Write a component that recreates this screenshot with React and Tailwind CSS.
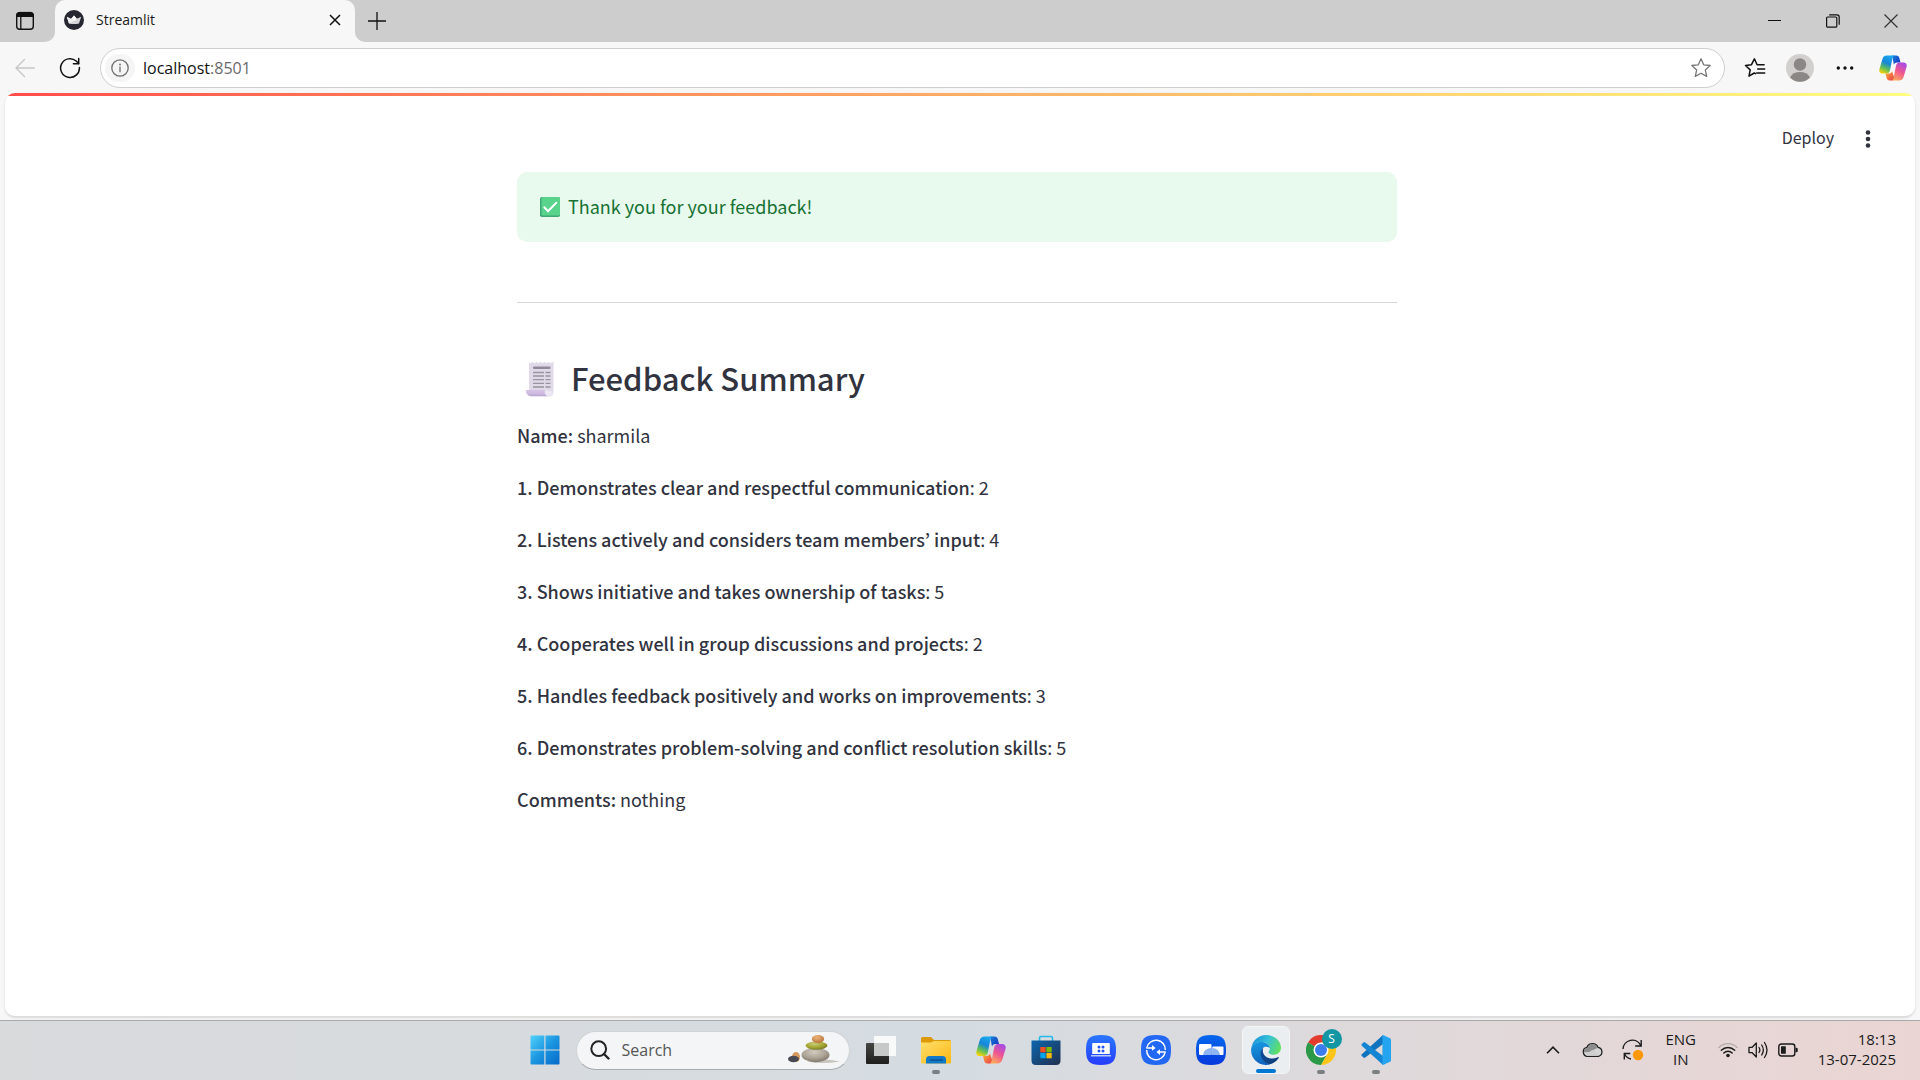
import React from "react";

const uiFont = 'font-["Open_Sans","Noto_Sans",sans-serif]';
const appFont = 'font-["Noto_Sans_CJK_KR",sans-serif]';

const ratings = [
  ["1. Demonstrates clear and respectful communication", 2],
  ["2. Listens actively and considers team members’ input", 4],
  ["3. Shows initiative and takes ownership of tasks", 5],
  ["4. Cooperates well in group discussions and projects", 2],
  ["5. Handles feedback positively and works on improvements", 3],
  ["6. Demonstrates problem-solving and conflict resolution skills", 5],
];

function TabActionsIcon() {
  return (
    <svg width="20" height="20" viewBox="0 0 20 20" fill="none" stroke="#111">
      <rect x="1.7" y="1.7" width="16.6" height="16.6" rx="3" strokeWidth="1.4" />
      <path d="M1.7 5.5V4.2a2.8 2.8 0 0 1 2.8-2.8h11a2.8 2.8 0 0 1 2.8 2.8v1.3z" fill="#111" />
      <path d="M5.8 5v13" strokeWidth="1.3" />
    </svg>
  );
}

function StreamlitIcon() {
  return (
    <svg width="20" height="20" viewBox="0 0 20 20">
      <circle cx="10" cy="10" r="10" fill="#262730" />
      <path d="M2.800 6.800 7.200 8.800 10 5.600l2.800 3.200L17.200 6.800 15 13.600q-5 1-10 0z" fill="#d5d5d8" />
      <path d="M7.200 8.800 10 5.600l2.800 3.200L10 11z" fill="#fff" />
      <path d="M2.800 6.800 10 11l-5 2.600z" fill="#f1f1f3" />
    </svg>
  );
}

function BackIcon() {
  return (
    <svg width="20" height="20" viewBox="0 0 20 20" fill="none" stroke="#c6c6c6" strokeWidth="1.3" strokeLinecap="round" strokeLinejoin="round">
      <path d="M19.3 10H1M9.5 1.5 1 10l8.500 8.500" />
    </svg>
  );
}

function ReloadIcon() {
  return (
    <svg width="22" height="22" viewBox="0 0 22 22" fill="none" stroke="#111" strokeWidth="1.5" strokeLinecap="round" strokeLinejoin="round">
      <path d="M20.400 10.500A9.400 9.400 0 1 1 17.200 4L19.600 6.600" />
      <path d="M19.700 1.500v5.200h-5.300" />
    </svg>
  );
}

function InfoIcon() {
  return (
    <svg width="18" height="18" viewBox="0 0 18 18" fill="none" stroke="#6e6e6e" strokeWidth="1.300">
      <circle cx="9" cy="9" r="8.200" />
      <path d="M9 8v4.800" strokeLinecap="round" />
      <circle cx="9" cy="5.500" r="0.900" fill="#6e6e6e" stroke="none" />
    </svg>
  );
}

function StarIcon() {
  return (
    <svg width="22" height="22" viewBox="0 0 22 22" fill="none" stroke="#777" strokeWidth="1.300" strokeLinejoin="round">
      <path d="m11 1.800 2.700 6 6.500.7-4.900 4.400 1.400 6.500L11 16.300l-5.700 3.100 1.400-6.500L1.800 8.500l6.500-.7z" />
    </svg>
  );
}

function FavoritesIcon() {
  return (
    <svg width="22" height="22" viewBox="0 0 22 22" fill="none" stroke="#111" strokeWidth="1.500" strokeLinejoin="round" strokeLinecap="round">
      <path d="M11.500 16.600 10.300 16 5 19.200l1.200-6.300-4.700-4.400 6-.8 2.900-5.900 2.700 5.900h7" />
      <path d="M13.700 11.900h7M12.700 16.100h8" />
    </svg>
  );
}

function AvatarIcon() {
  return (
    <svg width="28" height="28" viewBox="0 0 28 28">
      <circle cx="14" cy="14" r="14" fill="#d2d0ce" />
      <circle cx="14" cy="10.500" r="6.200" fill="#8a8785" />
      <path d="M4 23.500C6 19.800 9.500 18 14 18s8 1.800 10 5.500a14 14 0 0 1-20 0z" fill="#8a8785" />
    </svg>
  );
}

function CopilotIcon({ id, size }) {
  const blue = id + "-blue";
  const warm = id + "-warm";
  const dark = id + "-dark";
  const red = id + "-red";
  return (
    <svg width={size} height={size} viewBox="0 0 30 30">
      <defs>
        <linearGradient id={blue} x1="0.600" y1="0" x2="0.200" y2="1">
          <stop offset="0" stopColor="#1aa8ee" />
          <stop offset="0.400" stopColor="#1685d9" />
          <stop offset="0.700" stopColor="#5fbf5b" />
          <stop offset="1" stopColor="#ffd400" />
        </linearGradient>
        <linearGradient id={warm} x1="0.800" y1="0" x2="0.300" y2="1">
          <stop offset="0" stopColor="#a24bea" />
          <stop offset="0.500" stopColor="#f0568f" />
          <stop offset="1" stopColor="#ffab5c" />
        </linearGradient>
        <linearGradient id={dark} x1="0" y1="0" x2="1" y2="1">
          <stop offset="0" stopColor="#1b7fe0" />
          <stop offset="1" stopColor="#1230b8" />
        </linearGradient>
        <linearGradient id={red} x1="0" y1="0" x2="1" y2="1">
          <stop offset="0" stopColor="#ffb02e" />
          <stop offset="1" stopColor="#e8384f" />
        </linearGradient>
      </defs>
      <path d="M14 1.500h4.500c2 0 2.800 1 3.300 2.700L23 9h-3.500c-1.800 0-3 .8-3.500 2.500z" fill={`url(#${dark})`} />
      <path d="M7 21h3.500c1.500 0 3-.8 3.500-2.500L16.500 26l-1.500 2.500h-3.500c-2 0-2.800-1-3.300-2.700z" fill={`url(#${red})`} />
      <path d="M8.500 1.500h9c-1.800 0-2.600 1.200-3 2.600L11.800 17.500c-.6 2.300-1.900 3.500-3.700 3.500H4c-3 0-4.300-2-3.500-5L3.800 5c.7-2.300 2.300-3.500 4.700-3.500z" fill={`url(#${blue})`} />
      <path d="M21.500 28.500h-9c1.800 0 2.600-1.200 3-2.600L18.200 12.500c.6-2.300 1.900-3.500 3.700-3.500H26c3 0 4.300 2 3.500 5L26.200 25c-.7 2.300-2.300 3.500-4.700 3.500z" fill={`url(#${warm})`} />
    </svg>
  );
}

function CheckEmoji() {
  return (
    <svg width="20" height="20" viewBox="0 0 20 20" role="img" aria-label="Check mark">
      <rect width="20" height="20" rx="1.800" fill="#3fa876" />
      <rect x="1.500" width="18.500" height="18.500" rx="1.500" fill="#57d38c" />
      <path d="m4.300 10.300 3.700 4L16.300 5.700" fill="none" stroke="#fff" strokeWidth="2" strokeLinecap="round" />
    </svg>
  );
}

function ScrollEmoji() {
  return (
    <svg width="30" height="36" viewBox="0 0 30 36" role="img" aria-label="Receipt" className="shrink-0">
      <defs>
        <linearGradient id="scroll-roll" x1="0" y1="0" x2="0" y2="1">
          <stop offset="0" stopColor="#d3c3e4" />
          <stop offset="0.600" stopColor="#cdbbe0" />
          <stop offset="1" stopColor="#b39ccb" />
        </linearGradient>
      </defs>
      <path d="M4 1l1.700 1.300L7.500 1l2 1.300 2-1.300 2 1.300 2-1.300 2 1.300 2-1.300 2 1.300 2-1.300 2 1.300L27 1l1.500.8V31q0 4.500-5 4.500L4 31z" fill="#dfd9e8" />
      <path d="M1 29h19q-1 3 .6 4.700 1 1.300 2.600 1.600H6Q1 35 1 29z" fill="url(#scroll-roll)" />
      <path d="M20 29q7 2 8.500 1-.3 5-5 5.300Q19 34 20 29z" fill="#ece7f3" />
      <rect x="8" y="5.500" width="17.500" height="2.600" rx="1" fill="#8f899b" />
      <g stroke="#99929f" strokeWidth="1.300">
        <path d="M8 11.500h11M20.500 11.500h5M8 15h11M20.500 15h5M8 18.600h11M20.500 18.600h5M8 22.300h11M20.500 22.300h5M8 26h11M20.500 26h5" />
      </g>
    </svg>
  );
}

function StartIcon() {
  return (
    <svg width="30" height="30" viewBox="0 0 30 30">
      <defs>
        <linearGradient id="start" x1="0" y1="0" x2="1" y2="1">
          <stop offset="0" stopColor="#4fd2fb" />
          <stop offset="0.500" stopColor="#1b95e0" />
          <stop offset="1" stopColor="#0669c8" />
        </linearGradient>
      </defs>
      <path d="M1.500.5H14.300v14H.5v-13a1 1 0 0 1 1-1zM15.500.5h13a1 1 0 0 1 1 1v13h-14zM.5 15.500h13.800v14H1.500a1 1 0 0 1-1-1zM15.500 15.500h14v13a1 1 0 0 1-1 1h-13z" fill="url(#start)" />
    </svg>
  );
}

function StonesIcon() {
  return (
    <svg width="54" height="30" viewBox="0 0 54 30">
      <defs>
        <radialGradient id="stone-big" cx="0.450" cy="0.300" r="0.700">
          <stop offset="0" stopColor="#d2cbbf" />
          <stop offset="0.600" stopColor="#aaa294" />
          <stop offset="1" stopColor="#7f776b" />
        </radialGradient>
        <radialGradient id="stone-mid" cx="0.400" cy="0.300" r="0.700">
          <stop offset="0" stopColor="#c9cb7a" />
          <stop offset="0.600" stopColor="#a3a62f" />
          <stop offset="1" stopColor="#7a7a2a" />
        </radialGradient>
        <radialGradient id="stone-top" cx="0.400" cy="0.300" r="0.700">
          <stop offset="0" stopColor="#eeb37b" />
          <stop offset="1" stopColor="#b9783c" />
        </radialGradient>
      </defs>
      <path d="M20 26.500q15-4 33 0-18 3-33 0z" fill="#c9c4bd" />
      <ellipse cx="9" cy="22" rx="4" ry="5" fill="#d59a5c" />
      <ellipse cx="6.500" cy="24" rx="5.500" ry="3.200" fill="#474a52" />
      <ellipse cx="28.500" cy="20" rx="14" ry="7.200" fill="url(#stone-big)" />
      <ellipse cx="29.500" cy="10.600" rx="11" ry="4.200" fill="url(#stone-mid)" />
      <ellipse cx="31" cy="4" rx="6.200" ry="4" fill="url(#stone-top)" />
    </svg>
  );
}

function TaskViewIcon() {
  return (
    <svg width="30" height="30" viewBox="0 0 30 30">
      <defs>
        <linearGradient id="task-dark" x1="0" y1="0" x2="0" y2="1">
          <stop offset="0" stopColor="#454643" />
          <stop offset="1" stopColor="#1f201e" />
        </linearGradient>
      </defs>
      <rect x="0" y="8" width="23" height="21" rx="1" fill="url(#task-dark)" />
      <rect x="8" y="1" width="22" height="20" rx="1" fill="#fafafa" fillOpacity="0.950" />
      <rect x="8" y="8" width="15" height="13" fill="#c7c8c8" />
    </svg>
  );
}

function FolderIcon() {
  return (
    <svg width="30" height="30" viewBox="0 0 30 30">
      <defs>
        <linearGradient id="folder" x1="0" y1="0" x2="1" y2="1">
          <stop offset="0" stopColor="#ffdf6c" />
          <stop offset="1" stopColor="#fbb814" />
        </linearGradient>
      </defs>
      <path d="M0 3.500Q0 2 1.500 2H10l3 3h15.500Q30 5 30 6.500V12H0z" fill="#dd9a05" />
      <path d="M0 7.500h10L13 6h16q1 0 1 1v20.500q0 1-1 1H1q-1 0-1-1z" fill="url(#folder)" />
      <path d="M5 28.500v-4q0-3.500 3.500-3.500h13q3.500 0 3.500 3.500v4z" fill="#1279c9" />
      <path d="M9 25h13" stroke="#0a4f90" strokeWidth="1.400" />
    </svg>
  );
}

function StoreIcon() {
  return (
    <svg width="30" height="30" viewBox="0 0 30 30">
      <defs>
        <linearGradient id="store" x1="0" y1="0" x2="1" y2="1">
          <stop offset="0" stopColor="#0b66ae" />
          <stop offset="1" stopColor="#22304f" />
        </linearGradient>
      </defs>
      <path d="M8.500 6V3q0-1.500 1.500-1.500h10q1.500 0 1.500 1.500v3" fill="none" stroke="#25b8ec" strokeWidth="1.600" />
      <path d="M.5 5.500h29v20q0 4.500-4.500 4.500H5Q.5 30 .5 25.500z" fill="url(#store)" />
      <rect x="9.300" y="12" width="5.300" height="5.300" fill="#f25022" />
      <rect x="15.400" y="12" width="5.300" height="5.300" fill="#7fba00" />
      <rect x="9.300" y="18" width="5.300" height="5.300" fill="#00a4ef" />
      <rect x="15.400" y="18" width="5.300" height="5.300" fill="#ffb900" />
    </svg>
  );
}

function DexIcon() {
  return (
    <svg width="30" height="30" viewBox="0 0 30 30">
      <defs>
        <linearGradient id="dex" x1="0" y1="0" x2="0" y2="1">
          <stop offset="0" stopColor="#2977ff" />
          <stop offset="1" stopColor="#273dff" />
        </linearGradient>
      </defs>
      <path d="M15 0c11.500 0 15 3.500 15 15s-3.500 15-15 15S0 26.500 0 15 3.500 0 15 0z" fill="url(#dex)" />
      <path d="M7 8h16q.8 0 .8.800V19H6.200V8.800Q6.200 8 7 8z" fill="#fff" />
      <path d="M5 20h20v1.500H5z" fill="#b9c9ff" />
      <g fill="#2456f5">
        <circle cx="13" cy="12" r="1.500" />
        <circle cx="17" cy="12" r="1.500" />
        <circle cx="13" cy="16" r="1.500" />
        <circle cx="17" cy="16" r="1.500" />
      </g>
    </svg>
  );
}

function SwitchIcon() {
  return (
    <svg width="30" height="30" viewBox="0 0 30 30">
      <path d="M15 0c11.500 0 15 3.500 15 15s-3.500 15-15 15S0 26.500 0 15 3.500 0 15 0z" fill="#2367f5" />
      <g fill="none" stroke="#fff" strokeWidth="1.500">
        <path d="M5.900 12.700a9.300 9.300 0 0 1 18.400 2.300" />
        <path d="M24.100 17.300a9.300 9.300 0 0 1-18.400-2.300" />
        <path d="M5.200 12.900h6.500M24.800 17.100h-6.500" />
      </g>
      <path d="M11 10.100 14.600 12.900 11 15.700zM19 14.300l-3.600 2.800 3.600 2.800z" fill="#fff" />
    </svg>
  );
}

function FlowIcon() {
  return (
    <svg width="30" height="30" viewBox="0 0 30 30">
      <defs>
        <linearGradient id="flow" x1="0" y1="0" x2="0" y2="1">
          <stop offset="0" stopColor="#0568ed" />
          <stop offset="1" stopColor="#0638dc" />
        </linearGradient>
      </defs>
      <path d="M15 0c11.500 0 15 3.500 15 15s-3.500 15-15 15S0 26.500 0 15 3.500 0 15 0z" fill="url(#flow)" />
      <rect x="3" y="9" width="12.500" height="11" rx="1" fill="#fff" />
      <rect x="16.300" y="11.500" width="11.200" height="8.500" rx="1" fill="#fff" />
      <path d="M7 20a8.500 7 0 0 1 8.500-7v7z" fill="#8fb4f2" />
      <path d="M16.300 13a8 7 0 0 1 7.700 7h-7.700z" fill="#8fb4f2" />
    </svg>
  );
}

function EdgeIcon() {
  return (
    <svg width="30" height="30" viewBox="0 0 30 30">
      <defs>
        <linearGradient id="edge-top" x1="0" y1="0.300" x2="1" y2="0.600">
          <stop offset="0" stopColor="#1a8fd8" />
          <stop offset="0.500" stopColor="#35c1d8" />
          <stop offset="1" stopColor="#63e05f" />
        </linearGradient>
        <linearGradient id="edge-left" x1="0.300" y1="0" x2="0.500" y2="1">
          <stop offset="0" stopColor="#1699e0" />
          <stop offset="1" stopColor="#1062bd" />
        </linearGradient>
        <linearGradient id="edge-low" x1="0" y1="0" x2="1" y2="1">
          <stop offset="0" stopColor="#0f4f9c" />
          <stop offset="1" stopColor="#0e3b78" />
        </linearGradient>
      </defs>
      <path d="M.3 13C1.500 5.500 7.500 0 15 0c8.500 0 15 5.800 15 12.800 0 4.200-3.200 7-7.300 7-3.800 0-5.200-1.500-5.200-2.500 0-.8 1.300-1.400 1.300-3.700C18.800 9.800 15 7 10.500 7 5.500 7 1.500 9.500.3 13z" fill="url(#edge-top)" />
      <path d="M.2 13.500C1 9.500 5 6.900 10 6.900c4.800 0 8.400 2.600 8.800 6-6-3-9.300 1-8.300 6.600C11.400 25 15.500 28 19.500 29.300 17.500 30 16 30 14.500 30 6 29.500-.8 22.500.2 13.500z" fill="url(#edge-left)" />
      <path d="M12.300 12.700c-2.500 1.400-3.700 5.500-2 9.300C12 26 16 29.500 20 29c3-.9 5.800-3 7.700-6 .4-.7-.2-1.100-.9-.8-5.800 2.600-12.300 1-14.300-3.500-.9-2-.9-4.300-.2-6z" fill="url(#edge-low)" />
    </svg>
  );
}

function ChromeIcon() {
  return (
    <svg width="30" height="30" viewBox="0 0 30 30">
      <path d="M15 15 2 7.500A15 15 0 0 1 28 7.500H15z" fill="#e33b2e" />
      <path d="M15 15 2 7.500A15 15 0 0 0 15 30l6.500-11.200z" fill="#2a9a48" />
      <path d="M15 7.500h13A15 15 0 0 1 15 30l6.500-11.200z" fill="#fdc51a" />
      <circle cx="15" cy="15" r="7.500" fill="#fff" />
      <circle cx="15" cy="15" r="6" fill="#3b7ded" />
    </svg>
  );
}

function CodeIcon() {
  return (
    <svg width="30" height="30" viewBox="0 0 30 30">
      <path d="M22 0 .8 19.300q-.8.900 0 1.800l1.700 1.500q.8.600 1.700 0L22 9z" fill="#0f73be" />
      <path d="M22 30 .8 10.700q-.8-.9 0-1.800l1.700-1.500q.8-.6 1.700 0L22 21z" fill="#1485d2" />
      <path d="M22 0 29 3.200q1 .5 1 1.600v20.400q0 1.100-1 1.600L22 30q-.6-.2-.6-1V1q0-.8.600-1z" fill="#25a4f0" />
    </svg>
  );
}

function CloudIcon() {
  return (
    <svg width="22" height="16" viewBox="0 0 22 16">
      <path d="M5.500 14.300a4.500 4.500 0 0 1-.6-8.900A6 6 0 0 1 16 5.300a4.600 4.600 0 0 1 .5 9z" fill="#d6d6d6" stroke="#222" strokeWidth="1.300" />
      <path d="M1.900 10.300C1.700 7.500 3.500 6 5.400 5.900 6.500 3 8.500 2 10.500 2 13 2 15 3.600 15.500 5.900L10.300 8.200 13 10z" fill="#8d8d8d" />
      <path d="M3 12.500 10.300 8l6.400 4.800q-.4.800-1.500.900H6q-2.300 0-3-1.200z" fill="#cfcfcf" />
    </svg>
  );
}

function SyncIcon() {
  return (
    <svg width="22" height="22" viewBox="0 0 22 22" fill="none" stroke="#1b1b1b" strokeWidth="1.400">
      <path d="M1 10A9.300 9.300 0 0 1 18.700 6.500M19.200 1v6h-6M9 20a9 9 0 0 1-6.500-5M2.300 20.500v-6h6" />
      <circle cx="16" cy="16" r="5.200" fill="#ff9808" stroke="none" />
    </svg>
  );
}

function WifiIcon() {
  return (
    <svg width="20" height="16" viewBox="0 0 20 16" fill="none" strokeWidth="1.400" strokeLinecap="round">
      <path d="M1 5.500a12.500 12.500 0 0 1 18 0" stroke="#b3aba8" />
      <path d="M3.300 8.300a9.400 9.400 0 0 1 13.400 0M5.800 10.900a6 6 0 0 1 8.400 0" stroke="#1b1b1b" />
      <circle cx="10" cy="13.500" r="1.800" fill="#1b1b1b" />
    </svg>
  );
}

function VolumeIcon() {
  return (
    <svg width="20" height="18" viewBox="0 0 20 18" fill="none" stroke="#1b1b1b" strokeWidth="1.300" strokeLinecap="round" strokeLinejoin="round">
      <path d="M1 6.300h3.200L8.300 2v14l-4.100-4.300H1z" />
      <path d="M11 6.500q1.700 2.500 0 5M13.700 4q3.300 5 0 10M16.500 1.500q5 7.500 0 15" />
    </svg>
  );
}

function BatteryIcon() {
  return (
    <svg width="20" height="14" viewBox="0 0 20 14" fill="none" stroke="#1b1b1b" strokeWidth="1.400">
      <rect x=".8" y="1" width="16" height="12" rx="2.500" />
      <rect x="3" y="3.200" width="4.800" height="7.600" rx=".5" fill="#1b1b1b" stroke="none" />
      <path d="M17.500 4.500 19.700 5.300v3.400L17.500 9.500z" fill="#1b1b1b" stroke="none" />
    </svg>
  );
}

function TitleBar() {
  return (
    <header className="flex h-[42px] shrink-0 bg-[#cdcdcd]">
      <div className="w-[55px] bg-[#f7f7f7]">
        <button aria-label="Tab actions" className="flex h-[42px] w-full items-center justify-center rounded-br-[10px] bg-[#cdcdcd] pr-[6px] pb-px">
          <TabActionsIcon />
        </button>
      </div>
      <div className="flex w-[300px] items-center rounded-t-[10px] bg-[#f7f7f7] pr-2 pb-[2px] pl-[9px]">
        <StreamlitIcon />
        <span className="ml-3 flex-1 text-[14px] leading-5 text-[#1b1b1b]">Streamlit</span>
        <button aria-label="Close tab" className="flex h-6 w-6 items-center justify-center">
          <svg width="12" height="12" viewBox="0 0 12 12" stroke="#111" strokeWidth="1.500">
            <path d="m1 1 10 10M11 1 1 11" />
          </svg>
        </button>
      </div>
      <div className="flex-1 bg-[#f7f7f7]">
        <div className="flex h-[42px] items-center justify-between rounded-bl-[10px] bg-[#cdcdcd]">
          <button aria-label="New tab" className="flex h-10 w-[44px] items-center justify-center">
            <svg width="18" height="18" viewBox="0 0 18 18" stroke="#111" strokeWidth="1.300">
              <path d="M9 0v18M0 9h18" />
            </svg>
          </button>
          <div className="flex">
            <button aria-label="Minimize" className="flex h-10 w-[58px] items-center justify-center">
              <svg width="14" height="14" viewBox="0 0 14 14" stroke="#111" strokeWidth="1">
                <path d="M0 6.500h13" />
              </svg>
            </button>
            <button aria-label="Restore" className="flex h-10 w-[58px] items-center justify-center">
              <svg width="14" height="14" viewBox="0 0 14 14" fill="none" stroke="#111" strokeWidth="1.200">
                <rect x=".6" y="3" width="10.200" height="10.200" rx="1" />
                <path d="M3.200.8H11q2.200 0 2.200 2.200v7.800" />
              </svg>
            </button>
            <button aria-label="Close window" className="flex h-10 w-[58px] items-center justify-center">
              <svg width="14" height="14" viewBox="0 0 14 14" stroke="#333" strokeWidth="1.200">
                <path d="m.5.500 13 13M13.500.5l-13 13" />
              </svg>
            </button>
          </div>
        </div>
      </div>
    </header>
  );
}

function Toolbar() {
  return (
    <nav className="flex h-[51px] shrink-0 items-center bg-[#f7f7f7] pr-3 pl-[15px]">
      <button aria-label="Back" className="flex w-5 justify-center">
        <BackIcon />
      </button>
      <button aria-label="Refresh" className="ml-6 flex w-[22px] justify-center">
        <ReloadIcon />
      </button>
      <div className="ml-[19px] flex h-10 flex-1 items-center rounded-full border border-[#cfcfcf] bg-white pr-3 pl-1">
        <button aria-label="Site information" className="flex h-7 w-[30px] items-center justify-center rounded-full bg-[#f5f5f5]">
          <InfoIcon />
        </button>
        <div className="relative ml-2 flex-1">
          <input aria-label="Address" defaultValue="localhost:8501" className="w-full bg-transparent text-[16px] leading-6 text-transparent outline-none" />
          <div aria-hidden="true" className="pointer-events-none absolute inset-0 text-[16px] leading-6 text-[#111]">
            localhost<span className="text-[#6b6b6b]">:8501</span>
          </div>
        </div>
        <button aria-label="Add to favorites">
          <StarIcon />
        </button>
      </div>
      <div className="flex items-center pl-[19px]">
        <button aria-label="Favorites" className="flex w-[22px] justify-center">
          <FavoritesIcon />
        </button>
        <button aria-label="Profile" className="ml-5 flex w-7 justify-center">
          <AvatarIcon />
        </button>
        <button aria-label="Settings and more" className="ml-[22px] flex w-[18px] justify-center">
          <svg width="18" height="4" viewBox="0 0 18 4" fill="#111">
            <circle cx="2.300" cy="2" r="1.700" />
            <circle cx="9" cy="2" r="1.700" />
            <circle cx="15.700" cy="2" r="1.700" />
          </svg>
        </button>
        <button aria-label="Copilot" className="ml-6 flex w-[30px] justify-center">
          <CopilotIcon id="copilot-bar" size={28} />
        </button>
      </div>
    </nav>
  );
}

function Page() {
  return (
    <div className="flex min-h-0 flex-1 bg-[#f7f7f7] px-[5px] pb-[3px]">
      <div className={`${appFont} flex flex-1 flex-col overflow-hidden rounded-[10px] border-b border-[#dcdcdc] bg-white text-[#31333f] shadow-sm`}>
        <div className="h-[3px] shrink-0 bg-linear-to-r from-[#ff4b4b] to-[#fffd80]" />
        <div className="flex h-[76px] shrink-0 items-start justify-end gap-6 pt-[25px] pr-[37px]">
          <button className="text-[16px] leading-8">Deploy</button>
          <button aria-label="Main menu" className="flex h-9 w-5 items-center justify-center">
            <svg width="6" height="18" viewBox="0 0 6 18" fill="#31333f">
              <circle cx="3" cy="2.500" r="2.300" />
              <circle cx="3" cy="9" r="2.300" />
              <circle cx="3" cy="15.500" r="2.300" />
            </svg>
          </button>
        </div>
        <main className="flex justify-center pr-[6px]">
          <div className="w-full max-w-[880px]">
            <div role="alert" className="flex h-[70px] items-center rounded-[10px] bg-[#e8f9ee] px-[23px] text-[18px] leading-8 text-[#177233]">
              <CheckEmoji />
              <span className="ml-2 pb-[2px]">Thank you for your feedback!</span>
            </div>
            <hr className="mt-[60px] border-[#d6d6d9]" />
            <h3 className="mt-[54px] flex h-[42px] items-center text-[31px] leading-[42px] font-medium">
              <span className="mr-4 ml-2 pt-[2px]">
                <ScrollEmoji />
              </span>
              Feedback Summary
            </h3>
            <div className="mt-5 flex flex-col gap-5 text-[18px] leading-8">
              <p>
                <strong className="font-medium">Name:</strong> sharmila
              </p>
              {ratings.map(([label, score]) => (
                <p key={label}>
                  <strong className="font-medium">{label}</strong>: {score}
                </p>
              ))}
              <p>
                <strong className="font-medium">Comments:</strong> nothing
              </p>
            </div>
          </div>
        </main>
      </div>
    </div>
  );
}

function AppButton({ label, children, state }) {
  return (
    <button
      aria-label={label}
      className={
        state === "active"
          ? "relative flex h-12 w-12 items-center justify-center rounded-md border border-[#f3f5f6] bg-[#eaeef1]"
          : "relative flex h-12 w-12 items-center justify-center"
      }
    >
      {children}
      {state === "active" && <span className="absolute bottom-0 h-1 w-5 rounded-full bg-[#0078d4]" />}
      {state === "open" && <span className="absolute bottom-0 h-1 w-2 rounded-full bg-[#7c7f82]" />}
    </button>
  );
}

function Taskbar() {
  return (
    <footer className="grid h-[60px] shrink-0 grid-cols-[1fr_auto_1fr] items-center border-t border-[#a9a9a9] bg-linear-to-r from-[#d9dadc] via-[#d5dce1] via-50% to-[#ead5d3] pb-px text-[#1b1b1b]">
      <div />
      <div className="flex items-center gap-[7px]">
        <AppButton label="Start">
          <StartIcon />
        </AppButton>
        <label className="flex h-[39px] w-[274px] items-center rounded-full border border-b-[#a9abad] border-[#d0d3d5] bg-[#f3f5f6] pr-2 pl-[13px]">
          <svg width="20" height="20" viewBox="0 0 20 20" fill="none" stroke="#222" strokeWidth="2" strokeLinecap="round">
            <circle cx="8.700" cy="8.700" r="7.400" />
            <path d="m14 14 4.500 4.500" strokeWidth="2.400" />
          </svg>
          <input aria-label="Search" placeholder="Search" className="ml-3 w-0 flex-1 bg-transparent text-[16px] leading-6 outline-none placeholder:text-[#555]" />
          <StonesIcon />
        </label>
        <AppButton label="Task view">
          <TaskViewIcon />
        </AppButton>
        <AppButton label="File Explorer" state="open">
          <FolderIcon />
        </AppButton>
        <AppButton label="Copilot">
          <CopilotIcon id="copilot-task" size={30} />
        </AppButton>
        <AppButton label="Microsoft Store">
          <StoreIcon />
        </AppButton>
        <AppButton label="DeX">
          <DexIcon />
        </AppButton>
        <AppButton label="Smart Switch">
          <SwitchIcon />
        </AppButton>
        <AppButton label="Multi Control">
          <FlowIcon />
        </AppButton>
        <AppButton label="Microsoft Edge" state="active">
          <EdgeIcon />
        </AppButton>
        <AppButton label="Google Chrome" state="open">
          <ChromeIcon />
          <span className="absolute top-[3px] right-[3px] flex h-5 w-5 items-center justify-center rounded-full bg-[#1296a3] text-[12px] leading-5 text-white">S</span>
        </AppButton>
        <AppButton label="Visual Studio Code" state="open">
          <CodeIcon />
        </AppButton>
      </div>
      <div className="flex items-center justify-end pr-6">
        <button aria-label="Show hidden icons" className="flex w-5 justify-center">
          <svg width="14" height="8" viewBox="0 0 14 8" fill="none" stroke="#1b1b1b" strokeWidth="1.600">
            <path d="M1 7.200 7 1.200l6 6" />
          </svg>
        </button>
        <button aria-label="OneDrive" className="ml-[19px] flex w-[22px] justify-center">
          <CloudIcon />
        </button>
        <button aria-label="Updates" className="ml-[18px] flex w-[22px] justify-center">
          <SyncIcon />
        </button>
        <button className="ml-[18px] w-[38px] pb-[2px] text-center text-[15px] leading-5">
          ENG
          <br />
          IN
        </button>
        <button aria-label="Network, volume and battery" className="ml-[18px] flex items-center gap-[10px]">
          <WifiIcon />
          <VolumeIcon />
          <BatteryIcon />
        </button>
        <button className="ml-5 pb-[2px] text-right text-[15px] leading-5">
          18:13
          <br />
          13-07-2025
        </button>
      </div>
    </footer>
  );
}

export default function App() {
  return (
    <div className={`${uiFont} flex h-screen flex-col overflow-hidden bg-[#f7f7f7]`}>
      <TitleBar />
      <Toolbar />
      <Page />
      <Taskbar />
    </div>
  );
}
